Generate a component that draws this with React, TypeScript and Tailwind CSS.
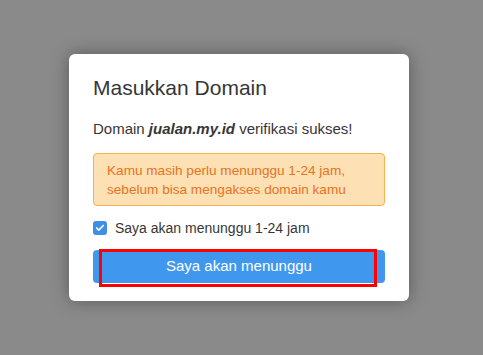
import { Check } from "lucide-react";

export default function App() {
  return (
    <div
      className="flex h-[355px] w-[483px] items-start bg-[#8a8a8a] pt-[54px] pl-[69px] text-[#363636]"
      style={{ fontFamily: '"Liberation Sans", Arial, sans-serif' }}
    >
      <div className="w-[340px] rounded-[6px] bg-white px-6 pt-[22px] pb-[18px] shadow-[0_0_18px_rgba(0,0,0,0.35)]">
        <h1 className="text-[21px] leading-6">Masukkan Domain</h1>

        <p className="mt-[19px] text-[15px] leading-5">
          Domain <b className="italic">jualan.my.id</b> verifikasi sukses!
        </p>

        <div className="mt-[14px] rounded-[4px] border border-[#f7b14e] bg-[#fde0b4] px-[13px] pt-[7px] pb-[6px] text-[13.6px] leading-[19px] text-[#e8731d]">
          Kamu masih perlu menunggu 1-24 jam,
          <br />
          sebelum bisa mengakses domain kamu
        </div>

        <label className="mt-3 flex items-center gap-2 text-[14px] leading-5">
          <span className="flex h-[14px] w-[14px] items-center justify-center rounded-[3px] bg-[#3d8fe6]">
            <Check className="h-[10px] w-[10px] text-white" strokeWidth={4} />
          </span>
          Saya akan menunggu 1-24 jam
        </label>

        <div className="relative mt-3">
          <button className="flex h-[33px] w-full items-center justify-center rounded-[4px] bg-[#4098ee] text-[15px] text-white">
            Saya akan menunggu
          </button>
          <div className="pointer-events-none absolute top-[-1px] left-[6px] h-[38px] w-[278px] border-[3px] border-[#ff0000]" />
        </div>
      </div>
    </div>
  );
}
